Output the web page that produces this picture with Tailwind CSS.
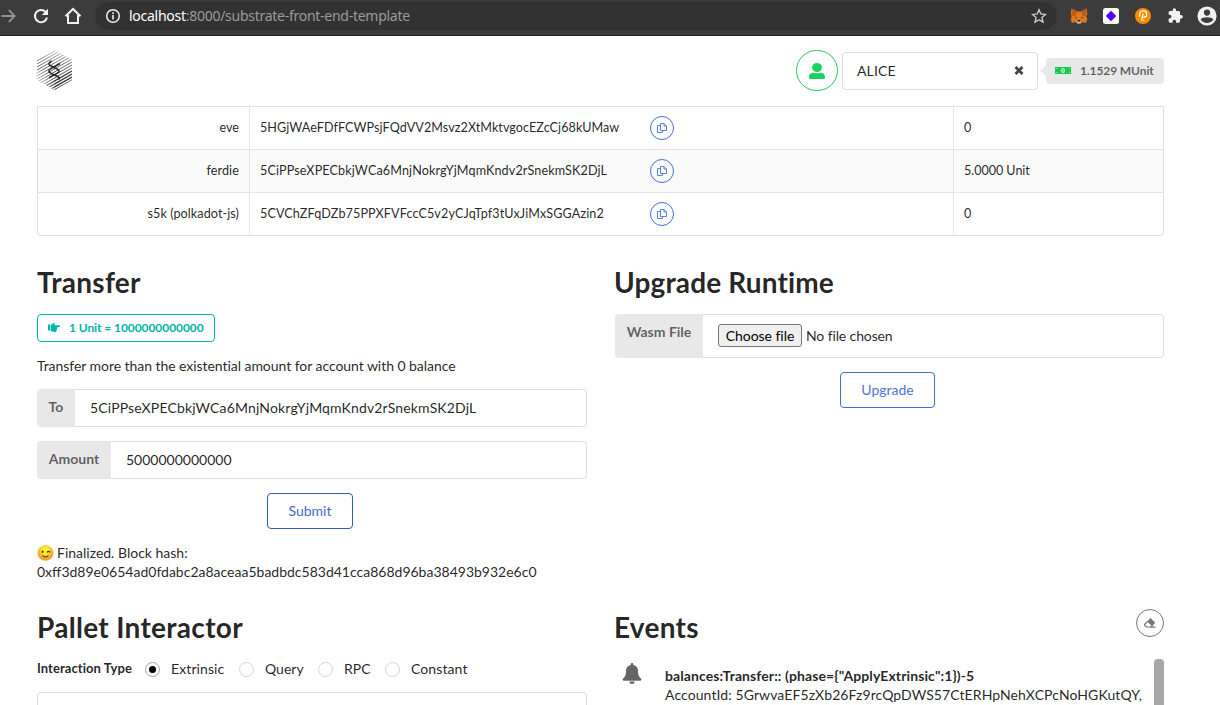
<!DOCTYPE html>
<html lang="en">
<head>
<meta charset="utf-8">
<title>Substrate Front End Template</title>
<script src="https://cdn.jsdelivr.net/npm/@tailwindcss/browser@4"></script>
</head>
<body class="w-[1220px] h-[705px] overflow-hidden bg-white font-[Lato,sans-serif] text-[14px] leading-[19px] text-black/87">
<svg class="hidden">
  <symbol id="copy" viewBox="0 0 12 12"><path d="M4.500 1.500h3.500l2.500 2.500v4.500h-6zM8 1.500V4h2.500M4.300 3.500H1.500v7h5V8.600" fill="none" stroke="#5b83da" stroke-width="1"/></symbol>
</svg>

<!-- Browser toolbar -->
<div class="flex h-9 items-start border-b border-[#202020] bg-[#3c3c3c]">
  <svg class="mt-2 h-4 w-4 shrink-0" viewBox="0 0 16 16" fill="none" stroke="#929292" stroke-width="1.800"><path d="M1.500 8h13M8.800 2l6 6-6 6"/></svg>
  <svg class="ml-[17px] mt-2 h-4 w-4 shrink-0" viewBox="0 0 16 16"><path d="M14 9.500A6.100 6.100 0 1 1 12.600 4" fill="none" stroke="#f1f1f1" stroke-width="2"/><path d="M15 .8V7H8.800z" fill="#f1f1f1"/></svg>
  <svg class="ml-[15px] mt-[7px] h-[18px] w-[18px] shrink-0" viewBox="0 0 18 18"><path d="M1.500 9.200L9 2l7.500 7.200M4 8v8h10V8" fill="none" stroke="#f1f1f1" stroke-width="2"/></svg>
  <div class="ml-[13px] mt-0.5 flex h-7 w-[962px] shrink-0 items-center rounded-full bg-[#323232] pr-[10px] pl-[10px]">
    <svg class="h-4 w-4 shrink-0" viewBox="0 0 16 16"><circle cx="8" cy="8" r="6.300" fill="none" stroke="#f1f1f1" stroke-width="1.500"/><path d="M7.200 7h1.600v4.500H7.200zM7.200 4.300h1.600v1.600H7.200z" fill="#f1f1f1"/></svg>
    <div class="ml-2 flex-1 pb-px whitespace-nowrap font-['Noto_Sans',sans-serif] text-[14px] tracking-[-0.27px] text-[#9b9b9b]"><span class="text-white">localhost</span>:8000/substrate-front-end-template</div>
    <svg class="h-4 w-4 shrink-0" viewBox="0 0 16 16"><path d="M8 1.700l1.800 4.300 4.700.4-3.600 3.100 1.100 4.600L8 11.700l-4 2.400 1.100-4.600L1.500 6.400 6.200 6z" fill="none" stroke="#d0d0d0" stroke-width="1.300"/></svg>
  </div>
  <svg class="ml-[13px] mt-2 h-4 w-[18px] shrink-0" viewBox="0 0 18 16"><path d="M1.500 .5l5.500 3h4l5.500-3 .8 5-1 2.700 1 3-1.300 3.800-3.700-1-1.500 1.500H7.200l-1.500-1.500-3.700 1L.7 11.200l1-3-1-2.700z" fill="#e2761b"/><path d="M1.500 .5l5.500 3L5.500 8 2 8zM16.500 .5l-5.500 3L12.500 8l3.500 0z" fill="#bd5c10"/><path d="M4.500 8.500L7 9.800l-.5 1zM13.500 8.500L11 9.800l.5 1z" fill="#233447"/><path d="M6 13l1.500-1h3l1.500 1-1.500 2.500h-3z" fill="#c9b8ab"/><path d="M7.500 12h3v1.500h-3z" fill="#222"/></svg>
  <svg class="ml-[15px] mt-2 h-4 w-4 shrink-0" viewBox="0 0 16 16"><rect width="16" height="16" rx="2.500" fill="#fff"/><path d="M8 2.800L13.200 8 8 13.200 2.800 8z" fill="#5200ff"/></svg>
  <svg class="ml-4 mt-2 h-4 w-4 shrink-0" viewBox="0 0 16 16"><circle cx="8" cy="8" r="8" fill="#ff8c00"/><path d="M4.800 8.500C3.500 5 6 2.800 8.300 2.900c4.500.2 4.500 6.300 0 6.400M8 5.500l-1.400 7.200" fill="none" stroke="#fff" stroke-width="1.300"/><circle cx="8.700" cy="12.400" r=".7" fill="#fff"/></svg>
  <svg class="ml-4 mt-2 h-4 w-4 shrink-0" viewBox="0 0 24 24"><path fill="#f1f1f1" d="M21 10.500h-1.500v-4c0-1.100-.9-2-2-2h-4V3a2.500 2.500 0 0 0-5 0v1.500h-4c-1.100 0-2 .9-2 2v3.800H4a2.700 2.700 0 0 1 0 5.400H2.500V20c0 1.100.9 2 2 2h3.800v-1.500a2.700 2.700 0 0 1 5.400 0V22h3.800c1.100 0 2-.9 2-2v-4H21a2.750 2.750 0 0 0 0-5.500z"/></svg>
  <svg class="ml-[14px] mt-[6px] h-5 w-5 shrink-0" viewBox="0 0 20 20"><circle cx="10" cy="10" r="9.600" fill="#f1f1f1"/><circle cx="10" cy="6.600" r="3.100" fill="#3c3c3c"/><path d="M3.600 13.600c1.400-3.200 11.400-3.200 12.800 0a7.700 7.700 0 0 1-12.800 0z" fill="#3c3c3c"/></svg>
</div>

<!-- Account header -->
<header class="flex h-[70px] items-center pr-14 pl-[37px]">
  <svg class="mb-[2px] h-10 w-[35px]" viewBox="0 0 35 40">
    <defs><clipPath id="hex"><path d="M17.500 0L35 10v20L17.500 40 0 30V10z"/></clipPath>
    <linearGradient id="shade" gradientUnits="userSpaceOnUse" x1="0" y1="0" x2="0" y2="40"><stop offset="0" stop-color="#bbb"/><stop offset=".25" stop-color="#777"/><stop offset=".5" stop-color="#444"/><stop offset="1" stop-color="#111"/></linearGradient>
    <linearGradient id="fade" gradientUnits="userSpaceOnUse" x1="4" y1="36" x2="17" y2="26"><stop offset="0" stop-color="#fff" stop-opacity=".7"/><stop offset="1" stop-color="#fff" stop-opacity="0"/></linearGradient></defs>
    <g clip-path="url(#hex)"><path d="M0 11L35-9M0 14L35-6M0 17L35-3M0 20L35 0M0 23L35 3M0 26L35 6M0 29L35 9M0 32L35 12M0 35L35 15M0 38L35 18" fill="none" stroke="url(#shade)" stroke-width=".9"/><path d="M0 41L35 21M0 44L35 24M0 47L35 27M0 50L35 30M0 53L35 33" fill="none" stroke="url(#shade)" stroke-width="1.300"/><path d="M0 20h18v20H0z" fill="url(#fade)"/></g>
    <path d="M14.500 11c-4 2.500-3 4 0 5.300l5 2.400c3.500 1.800 3.500 3.300 0 5l-4 2-3.500 2M23 13.500l-3.500 2.200-5 2.700c-3.500 1.900-3.500 3.400 0 5.200l5 2.400c3.500 1.700 3.500 2.500 2 3.500" fill="none" stroke="#222" stroke-width="1.500"/>
  </svg>
  <div class="mb-[2px] ml-auto flex h-[41px] w-[42px] items-center justify-center rounded-full border border-[#21c95a] pt-px">
    <svg class="h-4 w-4" viewBox="0 0 16 16" fill="#1bd05c"><ellipse cx="8" cy="4.500" rx="4.900" ry="4.500"/><path d="M0 14.500c0-3.800 2.300-4.800 4.500-4.800 2 .8 5 .8 7 0 2.200 0 4.500 1 4.500 4.800 0 1-.5 1.500-1.500 1.500h-13C.5 16 0 15.500 0 14.500z"/></svg>
  </div>
  <div class="ml-1 flex h-[38px] w-[196px] items-center justify-between rounded border border-[#dededf] pr-[13px] pb-[2px] pl-[14px]"><span class="tracking-[.12px]">ALICE</span>
    <svg class="h-[9px] w-[10px]" viewBox="0 0 10 9"><path d="M1.500 1l7 7M8.500 1l-7 7" stroke="#444" stroke-width="2.700"/></svg></div>
  <div class="relative ml-2 flex h-[26px] w-[118px] items-center rounded bg-[#e8e8e8] pb-[2px] pl-[9px] text-[12px] font-bold text-black/60">
    <span class="absolute top-[9px] -left-1 h-[8px] w-[8px] rotate-45 bg-[#e8e8e8]"></span>
    <svg class="h-[7px] w-4" viewBox="0 0 16 7"><path d="M0 0h16v7H0z" fill="#16cc50"/><path d="M1 2l1-1M1 5l1 1M15 2l-1-1M15 5l-1 1" stroke="#b9eec9" stroke-width=".8"/><ellipse cx="8" cy="3.500" rx="2" ry="2.500" fill="#c9f2d5"/><path d="M8 2v3" stroke="#16cc50"/></svg>
    <span class="ml-[9px] tracking-[-.1px] whitespace-nowrap">1.1529 MUnit</span>
  </div>
</header>

<main class="px-[37px] pr-14">
  <!-- Balances -->
  <div class="h-[130px] overflow-hidden rounded-b border border-[#dfdfe0] text-[12.600px]">
    <div class="grid h-[42px] grid-cols-[212px_704px_1fr] [&>*]:flex [&>*]:items-center">
      <div class="justify-end border-r border-[#e6e6e6] pr-[10px] pb-[2px]">eve</div>
      <div class="border-r border-[#e6e6e6] pl-[10px]"><span class="w-[390px] pb-[2px] tracking-[.055px]">5HGjWAeFDfFCWPsjFQdVV2Msvz2XtMktvgocEZcCj68kUMaw</span><span class="flex h-6 w-6 items-center justify-center rounded-full border border-[#3f6fd3]"><svg class="h-3 w-3"><use href="#copy"/></svg></span></div>
      <div class="pb-[2px] pl-[10px]">0</div>
    </div>
    <div class="grid h-[43px] grid-cols-[212px_704px_1fr] border-t border-[#e4e4e4] bg-[#fafafa] [&>*]:flex [&>*]:items-center">
      <div class="justify-end border-r border-[#e6e6e6] pr-[10px] pb-[2px] tracking-[.1px]">ferdie</div>
      <div class="border-r border-[#e6e6e6] pl-[10px]"><span class="w-[390px] pb-[2px] tracking-[.12px]">5CiPPseXPECbkjWCa6MnjNokrgYjMqmKndv2rSnekmSK2DjL</span><span class="flex h-6 w-6 items-center justify-center rounded-full border border-[#3f6fd3]"><svg class="h-3 w-3"><use href="#copy"/></svg></span></div>
      <div class="pb-[2px] pl-[10px] tracking-[-.05px]">5.0000 Unit</div>
    </div>
    <div class="grid h-[43px] grid-cols-[212px_704px_1fr] border-t border-[#e4e4e4] [&>*]:flex [&>*]:items-center">
      <div class="justify-end border-r border-[#e6e6e6] pr-[10px] pb-[2px] tracking-[.07px]">s5k (polkadot-js)</div>
      <div class="border-r border-[#e6e6e6] pl-[10px]"><span class="w-[390px] pb-[2px] tracking-[.11px]">5CVChZFqDZb75PPXFVFccC5v2yCJqTpf3tUxJiMxSGGAzin2</span><span class="flex h-6 w-6 items-center justify-center rounded-full border border-[#3f6fd3]"><svg class="h-3 w-3"><use href="#copy"/></svg></span></div>
      <div class="pb-[2px] pl-[10px]">0</div>
    </div>
  </div>

  <div class="grid grid-cols-[550px_549px] gap-x-7">
    <!-- Transfer -->
    <section class="h-[345px] pt-7">
      <h1 class="text-[28px] leading-9 font-bold tracking-[.27px]">Transfer</h1>
      <div class="mt-[14px] flex h-7 w-[178px] items-center rounded border border-[#00b5ad] pb-[2px] pl-[10px] text-[12px] font-bold text-[#00b5ad]">
        <svg class="h-[9px] w-3" viewBox="0 0 12 9" fill="#00b5ad"><path d="M0 1.500h2v6H0zM2.600 2c1.400 0 2-2 3.200-2 1 0 1 1.200.4 2.200H11c1.300 0 1.300 1.900 0 1.900H8.900c.8.400.6 1.500-.1 1.700.5.600.2 1.500-.5 1.600.2.900-.3 1.600-1.300 1.600-2 0-3-.8-4.400-1z"/></svg>
        <span class="ml-[9px] tracking-[-.07px] whitespace-nowrap">1 Unit = 1000000000000</span>
      </div>
      <p class="mt-[14px] tracking-[-.05px]">Transfer more than the existential amount for account with 0 balance</p>
      <div class="mt-[14px] flex h-[38px]"><div class="w-[38px] rounded-l bg-[#e8e8e8] pt-[8px] text-center font-bold text-black/60">To</div><div class="flex flex-1 items-center rounded-r border border-l-0 border-[#dededf] pb-[2px] pl-[15px] tracking-[.145px]">5CiPPseXPECbkjWCa6MnjNokrgYjMqmKndv2rSnekmSK2DjL</div></div>
      <div class="mt-[14px] flex h-[38px]"><div class="w-[74px] rounded-l bg-[#e8e8e8] pt-[8px] text-center font-bold text-black/60">Amount</div><div class="flex flex-1 items-center rounded-r border border-l-0 border-[#dededf] pb-[2px] pl-[15px]">5000000000000</div></div>
      <div class="mt-[14px] ml-[230px] flex h-9 w-[86px] items-center justify-center rounded border border-[#2f5bc2] pb-[2px] text-[#4568d0]">Submit</div>
      <div class="mt-[14px] flex items-center">
        <svg class="mr-[3px] h-4 w-[17px]" viewBox="0 0 17 16"><defs><radialGradient id="face" cy=".35"><stop offset=".4" stop-color="#fff02b"/><stop offset="1" stop-color="#f0a52e"/></radialGradient></defs><ellipse cx="8.500" cy="8" rx="8" ry="7.700" fill="url(#face)"/><ellipse cx="5.600" cy="6.800" rx="1" ry="1.300" fill="#4b3527"/><path d="M10.300 7c.8-.8 1.800-.8 2.600 0M6 10.800c1.300 1.300 3.700 1.300 5 0" fill="none" stroke="#4b3527" stroke-width="1.200" stroke-linecap="round"/></svg>
        <span>Finalized. Block hash:</span></div>
      <div class="whitespace-nowrap">0xff3d89e0654ad0fdabc2a8aceaa5badbdc583d41cca868d96ba38493b932e6c0</div>
    </section>

    <!-- Upgrade runtime -->
    <section class="h-[345px] pt-7">
      <h1 class="-ml-px text-[28px] leading-9 font-bold tracking-[.13px]">Upgrade Runtime</h1>
      <div class="mt-[14px] flex h-11"><div class="w-[88px] rounded-l bg-[#e8e8e8] pt-[8px] text-center font-bold text-black/60">Wasm File</div>
        <div class="flex flex-1 items-center rounded-r border border-l-0 border-[#dededf] pb-[2px] pl-[15px]"><span class="mt-px flex h-[23px] w-[84px] items-center justify-center rounded-[3px] border border-[#767676] bg-[#efefef] pb-px tracking-[-.05px] text-black">Choose file</span><span class="ml-1 tracking-[-.12px]">No file chosen</span></div></div>
      <div class="mt-[14px] ml-[225px] flex h-9 w-[95px] items-center justify-center rounded border border-[#3f6fd3] pb-[2px] text-[#4f74d6]">Upgrade</div>
    </section>

    <!-- Pallet interactor -->
    <section class="h-[124px] overflow-hidden pt-7">
      <h1 class="text-[28px] leading-9 font-bold tracking-[.3px]">Pallet Interactor</h1>
      <div class="mt-[14px] flex h-5 items-center">
        <span class="w-[108px] pb-[2px] text-[13px] font-bold tracking-[.06px]">Interaction Type</span>
        <span class="flex h-[15px] w-[15px] items-center justify-center rounded-full border border-[#a3a4a5]"><span class="h-[7px] w-[7px] rounded-full bg-black"></span></span><span class="w-[79px] pb-[2px] pl-[11px] tracking-[.1px]">Extrinsic</span>
        <span class="h-[15px] w-[15px] rounded-full border border-[#d4d4d5]"></span><span class="w-16 pb-[2px] pl-[11px]">Query</span>
        <span class="h-[15px] w-[15px] rounded-full border border-[#d4d4d5]"></span><span class="w-[52px] pb-[2px] pl-[11px]">RPC</span>
        <span class="h-[15px] w-[15px] rounded-full border border-[#d4d4d5]"></span><span class="pb-[2px] pl-[11px] tracking-[.1px]">Constant</span>
      </div>
      <div class="mt-[13px] h-[38px] rounded border border-[#dededf]"></div>
    </section>

    <!-- Events -->
    <section class="h-[124px] overflow-hidden pt-7">
      <div class="flex h-9 items-start justify-between"><h1 class="-ml-px text-[28px] leading-9 font-bold tracking-[.25px]">Events</h1>
        <div class="flex h-7 w-7 items-center justify-center rounded-full border border-[#767676]"><svg class="h-[10px] w-3" viewBox="0 0 12 10"><path d="M6.500 0l4.800 4.800-3.200 3.400L3.200 3.400z" fill="#767676"/><path d="M3.500 3.500L1 6c-.5.500-.5 1 0 1.500L2.700 9h4.200l1.300-1.200M6 9.200h5.500" fill="none" stroke="#767676" stroke-width="1.200"/></svg></div></div>
      <div class="mt-[14px] flex h-20">
        <svg class="mt-1 ml-[7px] h-[21px] w-5 shrink-0" viewBox="0 0 20 21" fill="#666"><path d="M10 0c.8 0 1.300.5 1.300 1.300v.6c3 .7 4.700 3 4.700 5.900 0 4.500 1 6.200 3 7.700.8.700.4 2.300-.8 2.300H1.800C.6 17.800.2 16.200 1 15.500c2-1.500 3-3.200 3-7.700 0-2.900 1.700-5.200 4.700-5.900v-.6C8.700.5 9.200 0 10 0z"/><path d="M7.200 18.600h5.600c0 3.200-5.600 3.200-5.600 0z"/></svg>
        <div class="ml-6 w-[488px] pt-[7px] whitespace-nowrap"><div class="-ml-px tracking-[.1px] font-bold">balances:Transfer:: (phase={"ApplyExtrinsic":1})-5</div><div class="-ml-px tracking-[.09px]">AccountId: 5GrwvaEF5zXb26Fz9rcQpDWS57CtERHpNehXCPcNoHGKutQY,</div></div>
        <div class="h-20 w-[10px] shrink-0 rounded-t-[4px] bg-[#a8a8a8]"></div>
      </div>
    </section>
  </div>
</main>
</body>
</html>
